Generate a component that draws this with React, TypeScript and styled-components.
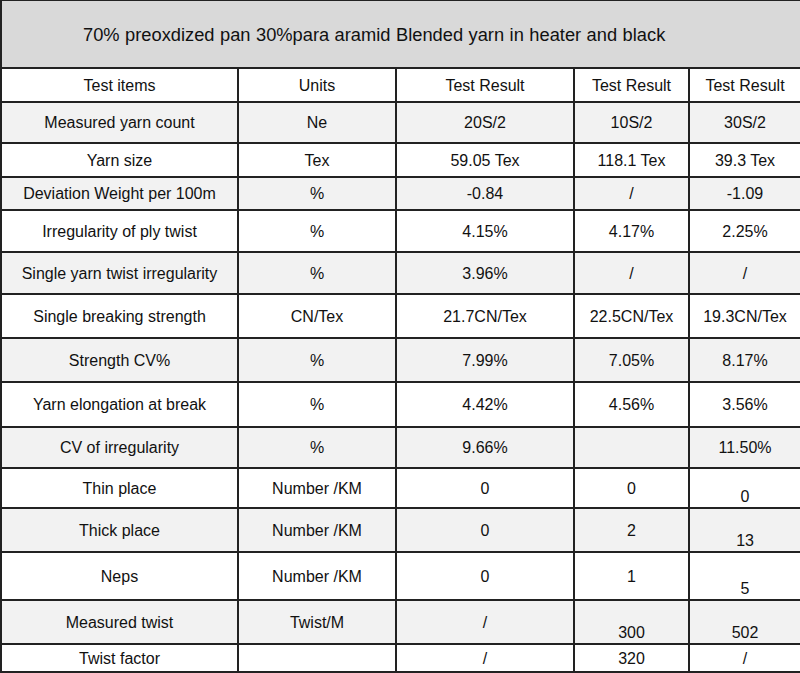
import React from "react";
import styled, { createGlobalStyle } from "styled-components";

const Global = createGlobalStyle`
  html, body { margin: 0; padding: 0; background: #ffffff; }
  body { font-family: "Liberation Sans", Arial, sans-serif; color: #111111; }
`;

const Table = styled.table`
  width: 800px;
  border-collapse: collapse;
  table-layout: fixed;
  font-family: "Liberation Sans", Arial, sans-serif;
  font-size: 16px;
  color: #111111;
`;

const Row = styled.tr<{ $shade?: boolean; $h: number }>`
  height: ${(p) => p.$h}px;
  background: ${(p) => (p.$shade ? "#f2f2f2" : "#ffffff")};
`;

const TitleCell = styled.td`
  background: #d9d9d9;
  border: 2px solid #222222;
  border-top-width: 1px;
  padding: 2px 0 0 81px;
  font-size: 18.3px;
  word-spacing: 0.4px;
  text-align: left;
  vertical-align: middle;
`;

const Cell = styled.td<{ $low?: boolean }>`
  border: 2px solid #222222;
  padding: ${(p) => (p.$low ? "0 0 1px 0" : "2px 0 0 0")};
  text-align: center;
  vertical-align: ${(p) => (p.$low ? "bottom" : "middle")};
  line-height: 18px;
  white-space: nowrap;
`;

type CellData = string | { v: string; low: true };

const rows: { h: number; cells: CellData[] }[] = [
  { h: 34, cells: ["Test items", "Units", "Test Result", "Test Result", "Test Result"] },
  { h: 41, cells: ["Measured yarn count", "Ne", "20S/2", "10S/2", "30S/2"] },
  { h: 34, cells: ["Yarn size", "Tex", "59.05 Tex", "118.1 Tex", "39.3 Tex"] },
  { h: 33, cells: ["Deviation Weight per 100m", "%", "-0.84", "/", "-1.09"] },
  { h: 42, cells: ["Irregularity of ply twist", "%", "4.15%", "4.17%", "2.25%"] },
  { h: 42, cells: ["Single yarn twist irregularity", "%", "3.96%", "/", "/"] },
  { h: 44, cells: ["Single breaking strength", "CN/Tex", "21.7CN/Tex", "22.5CN/Tex", "19.3CN/Tex"] },
  { h: 44, cells: ["Strength CV%", "%", "7.99%", "7.05%", "8.17%"] },
  { h: 45, cells: ["Yarn elongation at break", "%", "4.42%", "4.56%", "3.56%"] },
  { h: 41, cells: ["CV of irregularity", "%", "9.66%", "", "11.50%"] },
  { h: 40, cells: ["Thin place", "Number /KM", "0", "0", { v: "0", low: true }] },
  { h: 44, cells: ["Thick place", "Number /KM", "0", "2", { v: "13", low: true }] },
  { h: 48, cells: ["Neps", "Number /KM", "0", "1", { v: "5", low: true }] },
  { h: 44, cells: ["Measured twist", "Twist/M", "/", { v: "300", low: true }, { v: "502", low: true }] },
  { h: 28, cells: ["Twist factor", "", "/", "320", "/"] },
];

const widths = [237, 158, 178, 115, 112];

export default function App() {
  return (
    <>
      <Global />
      <Table>
        <colgroup>
          {widths.map((w, i) => (
            <col key={i} style={{ width: w }} />
          ))}
        </colgroup>
        <tbody>
          <Row $h={67}>
            <TitleCell colSpan={5}>
              70% preoxdized pan 30%para aramid Blended yarn in heater and black
            </TitleCell>
          </Row>
          {rows.map((r, ri) => (
            <Row key={ri} $h={r.h} $shade={ri % 2 === 1}>
              {r.cells.map((c, ci) =>
                typeof c === "string" ? (
                  <Cell key={ci}>{c}</Cell>
                ) : (
                  <Cell key={ci} $low>
                    {c.v}
                  </Cell>
                )
              )}
            </Row>
          ))}
        </tbody>
      </Table>
    </>
  );
}
